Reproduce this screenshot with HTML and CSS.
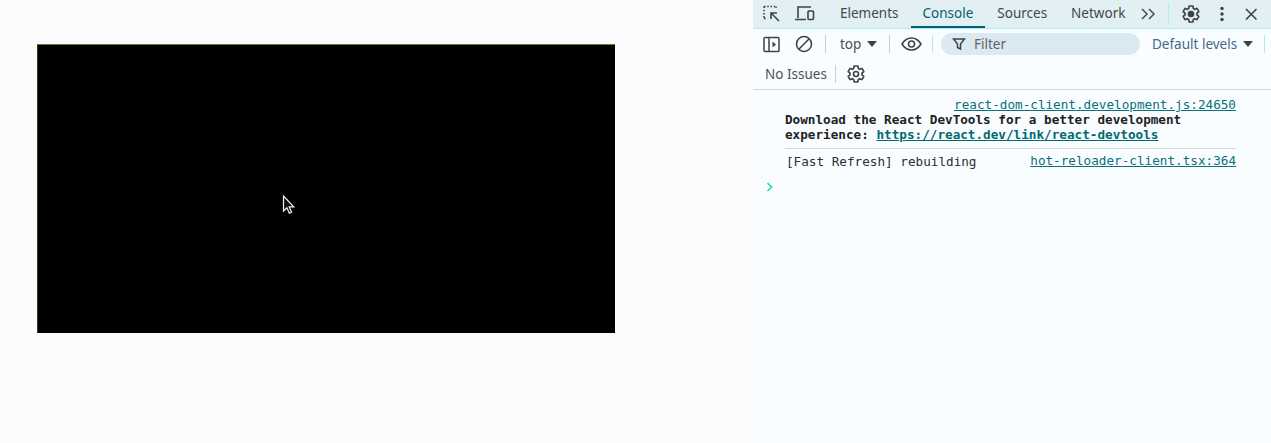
FILE: index.html
```html
<!DOCTYPE html>
<html lang="en">
<head>
<meta charset="utf-8">
<title>Console</title>
<link rel="stylesheet" href="styles.css">
</head>
<body>
<div class="page">
  <main class="stage">
    <div class="canvas">
      <svg class="cursor" width="14" height="20" viewBox="0 0 14 20"><path d="M1.5 1v15l3.4-3.2 2.4 5.4 2.3-1-2.4-5.3h4.6z" fill="#111" stroke="#f4f4f4" stroke-width="1.2"/></svg>
    </div>
  </main>
  <aside class="devtools">
    <div class="tabbar">
      <span class="ico first"><svg width="20" height="20" viewBox="0 0 20 20" fill="none" stroke="#3d4448" stroke-width="1.6"><path d="M2 2.5h11M2 2.500v12M2 14.500h3M14 2.500v3" stroke-dasharray="1.6 1.6"/><path d="M17 17 9 9M9 15V9h6"/></svg></span>
      <span class="ico device"><svg width="22" height="20" viewBox="0 0 22 20" fill="none" stroke="#3d4448" stroke-width="1.6"><path d="M4 14V3h13M1 15.500h11"/><rect x="14" y="7" width="5.500" height="8.500" rx="1"/></svg></span>
      <span class="sep-space"></span>
      <span class="tab">Elements</span>
      <span class="tab active">Console</span>
      <span class="tab">Sources</span>
      <span class="tab">Network</span>
      <span class="ico more"><svg width="16" height="14" viewBox="0 0 16 14" fill="none" stroke="#474f54" stroke-width="1.500"><path d="m2 2 5 5-5 5M9 2l5 5-5 5"/></svg></span>
      <span class="vline cy"></span>
      <span class="ico gear"><svg width="20" height="20" viewBox="0 0 24 24" fill="none" stroke="#3d4448" stroke-width="2"><path d="M19.140 12.940c.04-.3.06-.61.06-.94 0-.32-.02-.64-.07-.94l2.030-1.580a.49.49 0 0 0 .12-.61l-1.920-3.320a.488.488 0 0 0-.59-.22l-2.390.96c-.5-.38-1.030-.7-1.620-.94l-.36-2.540a.484.484 0 0 0-.48-.41h-3.840c-.24 0-.43.17-.47.41l-.36 2.540c-.59.24-1.130.57-1.620.94l-2.390-.96c-.22-.08-.47 0-.59.22L2.740 8.870c-.12.21-.08.47.12.61l2.030 1.580c-.05.3-.09.63-.09.94s.02.64.07.94l-2.030 1.580a.49.49 0 0 0-.12.61l1.920 3.320c.12.22.37.29.59.22l2.390-.96c.5.38 1.030.7 1.620.94l.36 2.540c.05.24.24.41.48.41h3.840c.24 0 .44-.17.47-.41l.36-2.540c.59-.24 1.130-.56 1.620-.94l2.390.96c.22.08.47 0 .59-.22l1.920-3.320c.12-.22.07-.47-.12-.61l-2.010-1.580z"/><circle cx="12" cy="12" r="3" fill="#3d4448"/></svg></span>
      <span class="ico dots"><svg width="4" height="16" viewBox="0 0 4 16" fill="#3d4448"><circle cx="2" cy="2.500" r="1.700"/><circle cx="2" cy="8" r="1.700"/><circle cx="2" cy="13.500" r="1.700"/></svg></span>
      <span class="ico close"><svg width="14" height="14" viewBox="0 0 14 14" fill="none" stroke="#3d4448" stroke-width="1.600"><path d="m2 2 10.500 10.500M12.500 2 2 12.500"/></svg></span>
    </div>
    <div class="toolbar">
      <span class="ico sidebar"><svg width="17" height="17" viewBox="0 0 17 17" fill="none" stroke="#3d4448" stroke-width="1.500"><rect x="1" y="1.500" width="15" height="14" rx="1"/><path d="M6 1.500v14"/><path d="m9.500 5.500 3.500 3-3.500 3z" fill="#3d4448" stroke="none"/></svg></span>
      <span class="ico clear"><svg width="18" height="18" viewBox="0 0 18 18" fill="none" stroke="#3d4448" stroke-width="1.600"><circle cx="9" cy="9" r="7.500"/><path d="M3.800 14.200 14.200 3.800"/></svg></span>
      <span class="vline"></span>
      <span class="select top">top<i class="caret"></i></span>
      <span class="vline"></span>
      <span class="ico eye"><svg width="21" height="14" viewBox="0 0 21 14" fill="none" stroke="#3d4448" stroke-width="1.600"><path d="M1 7c2.500-4 5.800-6 9.500-6S17.500 3 20 7c-2.500 4-5.800 6-9.500 6S3.500 11 1 7z"/><circle cx="10.500" cy="7" r="3"/></svg></span>
      <span class="vline cy"></span>
      <div class="filter">
        <svg width="14" height="14" viewBox="0 0 14 14" fill="none" stroke="#3d4448" stroke-width="1.500"><path d="M1.500 2h11L8.500 7v5l-3-1.500V7z"/></svg>
        <span>Filter</span>
      </div>
      <span class="select levels">Default levels<i class="caret"></i></span>
      <span class="vline cy end"></span>
    </div>
    <div class="issues">
      <span class="noissues">No Issues</span>
      <span class="vline"></span>
      <span class="ico gear2"><svg width="20" height="20" viewBox="0 0 24 24" fill="none" stroke="#3d4448" stroke-width="2"><path d="M19.140 12.940c.04-.3.06-.61.06-.94 0-.32-.02-.64-.07-.94l2.030-1.580a.49.49 0 0 0 .12-.61l-1.920-3.320a.488.488 0 0 0-.59-.22l-2.390.96c-.5-.38-1.030-.7-1.620-.94l-.36-2.540a.484.484 0 0 0-.48-.41h-3.840c-.24 0-.43.17-.47.41l-.36 2.540c-.59.24-1.130.57-1.620.94l-2.390-.96c-.22-.08-.47 0-.59.22L2.740 8.870c-.12.21-.08.47.12.61l2.030 1.580c-.05.3-.09.63-.09.94s.02.64.07.94l-2.030 1.580a.49.49 0 0 0-.12.61l1.920 3.320c.12.22.37.29.59.22l2.390-.96c.5.38 1.030.7 1.620.94l.36 2.540c.05.24.24.41.48.41h3.840c.24 0 .44-.17.47-.41l.36-2.540c.59-.24 1.130-.56 1.620-.94l2.390.96c.22.08.47 0 .59-.22l1.920-3.320c.12-.22.07-.47-.12-.61l-2.010-1.580z"/><circle cx="12" cy="12" r="3"/></svg></span>
    </div>
    <div class="console">
      <div class="msg first-msg">
        <a class="src">react-dom-client.development.js:24650</a>
        <div class="bold">Download the React DevTools for a better development<br>experience: <a class="link">https://react.dev/link/react-devtools</a></div>
      </div>
      <div class="msg second-msg">
        <span class="log">[Fast Refresh] rebuilding</span>
        <a class="src">hot-reloader-client.tsx:364</a>
      </div>
      <div class="prompt"><svg width="7" height="10" viewBox="0 0 7 10" fill="none" stroke="#1fe08a" stroke-width="1.600"><path d="m1.500 1 4 4-4 4"/></svg></div>
    </div>
  </aside>
</div>
</body>
</html>
```
FILE: styles.css
```css
* { box-sizing: border-box; }
html, body { margin: 0; height: 100%; }
body { background: #fcfcff; overflow: hidden; font-family: "Noto Sans", "Open Sans", sans-serif; }
.page { display: flex; height: 443px; }
.stage { flex: 0 0 753px; padding: 44px 0 0 37px; }
.canvas { position: relative; width: 578px; height: 289px; background: #000; border-top: 1px solid #77771a; border-left: 1px solid #3b3b10; }
.cursor { position: absolute; left: 244px; top: 150px; }

.devtools { flex: 1; display: flex; flex-direction: column; background: #f9fdff; font-size: 13px; color: #3d4448; }
.ico { display: flex; align-items: center; justify-content: center; flex: none; }
.vline { flex: none; width: 1px; height: 18px; background: #c6d0d2; }
.vline.cy { background: #a8ecf5; }

.tabbar { display: flex; align-items: center; height: 29px; background: #e2eff3; border-bottom: 1px solid #a8eefa; padding-left: 9px; }
.first { width: 20px; }
.device { width: 22px; margin-left: 12px; }
.sep-space { width: 12px; }
.tab { height: 28px; line-height: 27px; padding: 0 12px; font-size: 13.500px; color: #41494d; white-space: nowrap; position: relative; }
.tab.active { color: #0b5e6e; }
.tab.active::after { content: ""; position: absolute; left: 0; right: 0; bottom: 0; height: 2px; background: #00626f; }
.more { width: 16px; margin-left: 3px; }
.tabbar .vline { margin-left: 12px; height: 22px; }
.gear { width: 20px; margin-left: 12px; }
.dots { width: 4px; margin-left: 19px; }
.close { width: 14px; margin-left: 20px; }

.toolbar { display: flex; align-items: center; height: 30px; padding-left: 10px; }
.sidebar { width: 17px; }
.clear { width: 18px; margin-left: 15px; }
.toolbar .vline { height: 18px; }
.clear + .vline { margin-left: 12px; }
.select { display: flex; align-items: center; white-space: nowrap; font-size: 13.500px; }
.top { padding-left: 14px; color: #474f54; box-sizing: content-box; width: 38px; }
.caret { width: 0; height: 0; border-left: 5px solid transparent; border-right: 5px solid transparent; border-top: 6px solid #3d4448; margin-left: 6px; }
.top + .vline { margin-left: 11px; }
.eye { width: 21px; margin-left: 11px; }
.eye + .vline { margin-left: 10px; }
.filter { display: flex; align-items: center; gap: 8px; width: 199px; height: 22px; margin-left: 8px; padding-left: 11px; border-radius: 11px; background: #dbe9f1; color: #5b6468; font-size: 13.500px; }
.levels { margin-left: 12px; color: #3f6a8c; }
.end { margin-left: 11px; }

.issues { display: flex; align-items: center; height: 31px; padding-left: 12px; border-bottom: 1px solid #d2d6d4; }
.noissues { font-size: 13.500px; color: #4b5255; width: 70px; white-space: nowrap; }
.gear2 { width: 20px; margin-left: 10px; }

.console { flex: 1; font-family: "DejaVu Sans Mono", monospace; font-size: 12.660px; line-height: 15px; color: #1d2225; padding: 7px 35px 0 32px; }
.msg a.src { color: #0b6f7c; text-decoration: underline; white-space: nowrap; }
.first-msg { display: flex; flex-direction: column; }
.first-msg .src { align-self: flex-end; }
.bold { font-weight: 700; }
.link { color: #006a6e; text-decoration: underline; }
.second-msg { display: flex; justify-content: space-between; margin-top: 6px; padding-top: 4px; padding-left: 1px; border-top: 1px solid #cfdcdd; box-shadow: 3px 0 0 -3px transparent; }
.log { color: #2b3033; padding-top: 1px; }
.prompt { margin: 13px 0 0 -19px; height: 10px; display: flex; }
```
